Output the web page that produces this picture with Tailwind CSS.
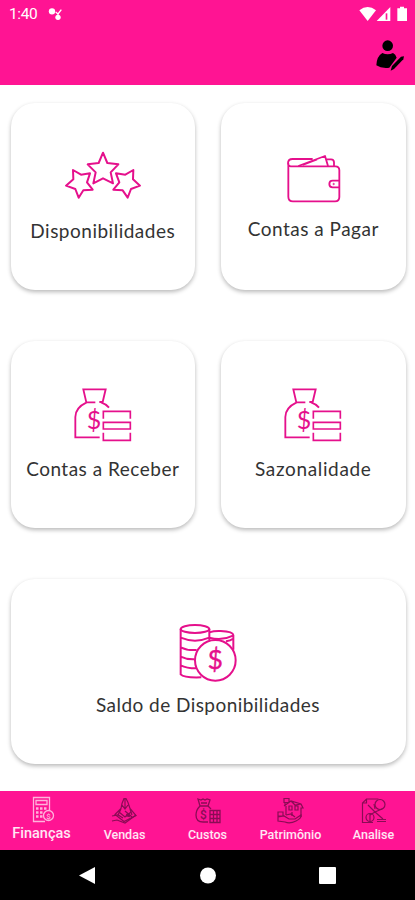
<!DOCTYPE html>
<html lang="pt-BR">
<head>
  <meta charset="UTF-8" />
  <meta name="viewport" content="width=device-width, initial-scale=1.0" />
  <title>Finanças</title>
  <script src="https://cdn.jsdelivr.net/npm/@tailwindcss/browser@4"></script>
</head>
<body class="bg-white font-['Lato',sans-serif] text-[#333] overflow-hidden">
  <div class="w-[415px] h-[900px] flex flex-col">
    <header class="h-[84.5px] bg-[#ff1493] shrink-0">
      <!-- status bar -->
      <div class="h-[28px] flex items-center pl-[9px] pr-[6px] text-white">
        <span class="font-['Roboto',sans-serif] text-[15.5px] leading-[28px] tracking-[-0.4px]">1:40</span>
        <svg class="ml-[11px]" width="16" height="14" viewBox="147 21 48 42" fill="#fff">
          <circle cx="159" cy="34" r="9.5" />
          <circle cx="177" cy="52" r="8" />
          <path d="M170 36l7 6 10-13M177 40v12" stroke="#fff" stroke-width="4" fill="none" />
        </svg>
        <svg class="ml-auto" width="50" height="16" viewBox="459 15 150 48" fill="#fff">
          <path d="M460 28q25-20 50 0l-25 32z" />
          <path d="M512 60l41-42v42z" />
          <path d="M539 37h5v19h-5z" fill="#ff1493" />
          <path d="M574 22h8v-5h12v5h9v38h-29z" />
        </svg>
      </div>
      <div class="flex justify-end pr-[10px] pt-[9px]">
        <svg width="30" height="34" viewBox="504 111 90 102">
          <circle cx="542" cy="137" r="16" />
          <path d="M508 196q1-27 18-37 16 8 32 0 8 4 11 14l-22 30q-24 3-39-7z" />
          <path d="M551 212l4-14 27-28 9-1-2 9-28 29z" />
        </svg>
      </div>
    </header>

    <main class="flex-1 pl-[10.5px] pr-[9.5px] pt-[18.5px]">
      <div class="grid grid-cols-2 gap-x-[26px] gap-y-[51px]">
        <article class="h-[187px] rounded-[24px] bg-white shadow-[0_2px_4px_rgba(0,0,0,0.28)] flex flex-col items-center pt-[44px]">
          <svg width="80" height="56" viewBox="189 156 240 168" fill="none" stroke="#e5108c" stroke-width="6" stroke-linejoin="round">
            <path d="M309 173l13 31 33 4-23 24 7 33-30-15-29 15 7-33-24-24 33-4z" />
            <path d="M219 225l24 14 27-4-9 27 17 22-28 2-14 22-10-26-28-10 22-19z" />
            <path d="M400 225l-24 14-28-4 10 27-18 22 28 2 15 22 10-26 27-10-21-19z" />
          </svg>
          <h2 class="mt-[16px] text-[19px] leading-[24px] tracking-[0.5px] whitespace-nowrap">Disponibilidades</h2>
        </article>

        <article class="h-[187px] rounded-[24px] bg-white shadow-[0_2px_4px_rgba(0,0,0,0.28)] flex flex-col items-center pt-[49px]">
          <svg width="57" height="53" viewBox="234 171 171 159" fill="none" stroke="#e5108c" stroke-width="5.5" stroke-linejoin="round">
            <path d="M244 205v100q0 14 14 14h126q13 0 13-13v-80q0-12-12-12H251q-8-1-8-9 0-13 14-13h60" />
            <path d="M274 213l80-30 9 30M330 193l-43 17M359 193h13q9 0 9 9v11" />
            <path d="M397 257h-20q-10 0-10 10t10 10h20" />
            <circle cx="380" cy="267" r="2" stroke-width="3" />
          </svg>
          <h2 class="mt-[12px] text-[19px] leading-[24px] tracking-[0.5px] whitespace-nowrap">Contas a Pagar</h2>
        </article>

        <article class="h-[187px] rounded-[24px] bg-white shadow-[0_2px_4px_rgba(0,0,0,0.28)] flex flex-col items-center pt-[45px]">
          <svg width="62" height="59" viewBox="216 153 186 177" fill="none" stroke="#e5108c" stroke-width="5.5">
            <path d="M286 202h-27l-9-39h67l-9 38h-10M260 202q-34 16-34 44v61h73M303 202q14 4 24 16" />
            <path d="M310 251v-22h81v22M310 282v-20h81v20zM310 293v23h81v-23" stroke-width="5" />
            <text x="282" y="281" text-anchor="middle" font-family="Lato" font-size="75" fill="#e5108c" stroke="none">$</text>
          </svg>
          <h2 class="mt-[12px] text-[19px] leading-[24px] tracking-[0.5px] whitespace-nowrap">Contas a Receber</h2>
        </article>

        <article class="h-[187px] rounded-[24px] bg-white shadow-[0_2px_4px_rgba(0,0,0,0.28)] flex flex-col items-center pt-[45px]">
          <svg width="62" height="59" viewBox="216 153 186 177" fill="none" stroke="#e5108c" stroke-width="5.5">
            <path d="M286 202h-27l-9-39h67l-9 38h-10M260 202q-34 16-34 44v61h73M303 202q14 4 24 16" />
            <path d="M310 251v-22h81v22M310 282v-20h81v20zM310 293v23h81v-23" stroke-width="5" />
            <text x="282" y="281" text-anchor="middle" font-family="Lato" font-size="75" fill="#e5108c" stroke="none">$</text>
          </svg>
          <h2 class="mt-[12px] text-[19px] leading-[24px] tracking-[0.65px] whitespace-nowrap">Sazonalidade</h2>
        </article>

        <article class="col-span-2 h-[185px] rounded-[24px] bg-white shadow-[0_2px_4px_rgba(0,0,0,0.28)] flex flex-col items-center pt-[42px]">
          <svg width="62" height="63" viewBox="291 153 186 189" fill="none" stroke="#e5108c" stroke-width="6">
            <ellipse cx="345" cy="177" rx="43" ry="12" />
            <path d="M302 177v136q10 11 62 9M388 177v34M302 203q43 18 86 0M302 232q20 10 48 8M302 260q18 9 42 8M302 286q18 9 46 9" />
            <path d="M388 187q15-5 34-4 37 2 38 12v44M388 203q37 11 71-6M438 214q14-2 21-8" />
            <circle cx="406" cy="271" r="61" fill="#fff" />
            <text x="406" y="298" text-anchor="middle" font-family="Lato" font-size="80" fill="#e5108c" stroke="#e5108c" stroke-width="1">$</text>
          </svg>
          <h2 class="mt-[9px] text-[19px] leading-[24px] tracking-[0.45px] whitespace-nowrap">Saldo de Disponibilidades</h2>
        </article>
      </div>
    </main>

    <nav class="h-[59px] bg-[#ff1493] grid grid-cols-5 shrink-0 font-['Roboto',sans-serif] font-medium text-[12.5px] text-white/90">
      <a class="flex flex-col items-center pt-[5px] text-[14.5px]">
        <svg width="26" height="28" viewBox="0 0 26 28" fill="none" stroke="#ffb3dc" stroke-width="1.3">
          <path d="M16 25.500H4.500v-24h16V14M7 4.500h11v4H7z" />
          <path d="M7 12.500h11M7 16.500h8M7 20.500h7" stroke-width="2.500" stroke-dasharray="2.500 1.500" />
          <circle cx="19.500" cy="19.500" r="5" />
          <text x="19.500" y="22.500" text-anchor="middle" font-size="8" fill="#ffb3dc" stroke="none">$</text>
        </svg>
        <span class="leading-[19px]">Finanças</span>
      </a>
      <a class="flex flex-col items-center pt-[6px]">
        <svg width="28" height="28" viewBox="0 0 28 28" fill="none" stroke="#8a0c55" stroke-width="1.2">
          <path d="M13 1.500l-2 5-1 5-6 6 9 7 12-6-6-7-2-6-2-4zM14 2v10M11 8l3 4 3-4M10 12l-3 6M19 12l2 6" />
          <path d="M1 19l6-1 5 3M1 24l5-1 8 3 11-8M8 15l6 5 6-5M14 14l7 6" />
          <path d="M15 18l4 1" stroke-width="2.500" />
        </svg>
        <span class="leading-[19px]">Vendas</span>
      </a>
      <a class="flex flex-col items-center pt-[6px]">
        <svg width="28" height="28" viewBox="0 0 28 28" fill="none" stroke="#8a0c55" stroke-width="1.300">
          <path d="M4 2l3 1 2-1 2 1 2-1 3 1-2 6H6zM6 9q-4 4-4 9 0 7 7 7h5M14 9l3 3M7 6h6" />
          <path d="M16 13.500h10v12H16zM16 17.500h10M16 21.500h10M19.500 13.500v12M23 13.500v12" />
          <text x="9.500" y="22" text-anchor="middle" font-size="12" fill="#8a0c55" stroke="none">$</text>
        </svg>
        <span class="leading-[19px]">Custos</span>
      </a>
      <a class="flex flex-col items-center pt-[6px]">
        <svg width="28" height="28" viewBox="0 0 28 28" fill="none" stroke="#8a0c55" stroke-width="1.2">
          <path d="M7 9l7-5 10 3 2 4h-2v9M9 9v9M7 1.500h5v4H7zM8 5v4M12 9h3v4h-3zM18 9h3v4h-3zM15 15v4M14 4l4 4 6-1" />
          <path d="M1 15h5v4H1zM1 20l6-1 5 3h6l6-4q1 3-5 6-6 3-11 1l-7-1zM9 18l5-1 4 3" />
        </svg>
        <span class="leading-[19px]">Patrimônio</span>
      </a>
      <a class="flex flex-col items-center pt-[6px]">
        <svg width="28" height="28" viewBox="0 0 28 28" fill="none" stroke="#8a0c55" stroke-width="1.200">
          <path d="M13 25.500H2.500V6l4-4h12M2.500 6h4V2M8 8l7 7 8 7M22 12l-7 3-5 3" />
          <circle cx="20" cy="7.500" r="5" />
          <circle cx="10" cy="20.500" r="4" />
          <path d="M10 17v7M17 22.500h9M17 24.500h9M15 12l-1-5" />
        </svg>
        <span class="leading-[19px]">Analise</span>
      </a>
    </nav>

    <!-- android buttons -->
    <div class="h-[50px] bg-black shrink-0 flex items-center justify-center">
      <svg width="260" height="20" viewBox="0 0 260 20" fill="#fff">
        <path d="M1 10.500L17 2v17z" />
        <circle cx="130" cy="10.500" r="8" />
        <rect x="241" y="2" width="17" height="17" rx="1" />
      </svg>
    </div>
  </div>
</body>
</html>
